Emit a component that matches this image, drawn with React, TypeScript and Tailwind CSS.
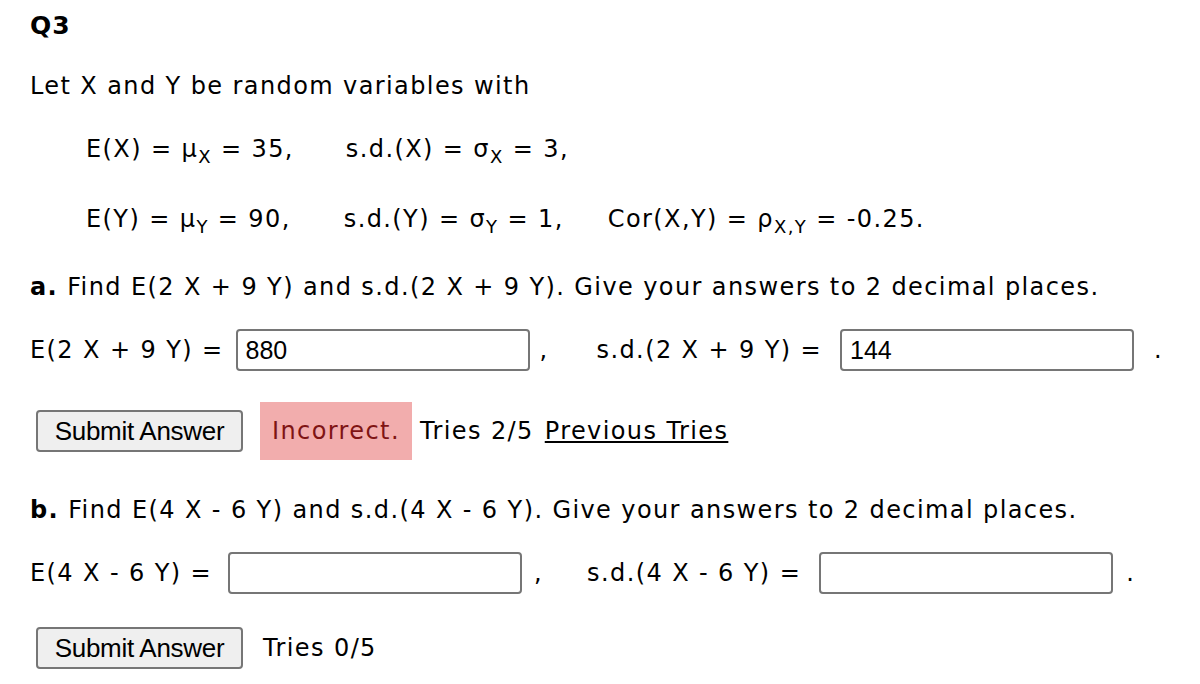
import React from "react";

const font = { fontFamily: 'Verdana, "DejaVu Sans", sans-serif' };

function Sub({ children }: { children: React.ReactNode }) {
  return <span className="relative top-[6px] text-[18px]">{children}</span>;
}

function AnswerBox({ value }: { value?: string }) {
  return (
    <input
      readOnly
      value={value ?? ""}
      className="w-[294px] h-[42px] border-2 border-[#767676] rounded-[4px] px-[8px] text-[25px] tracking-normal text-black bg-white outline-none font-['Liberation_Sans',Arial,sans-serif]"
    />
  );
}

function SubmitButton() {
  return (
    <button className="h-[42px] w-[207px] ml-[6px] border-2 border-[#767676] rounded-[4px] bg-[#efefef] text-[26px] tracking-[-0.3px] text-black font-['Liberation_Sans',Arial,sans-serif]">
      Submit Answer
    </button>
  );
}

export default function App() {
  return (
    <div className="w-[1200px] h-[684px] bg-white text-black text-[24px] leading-[28px] tracking-[1.4px] pl-[30px] overflow-hidden" style={font}>
      <div className="pt-[11px] text-[25px] font-bold leading-[30px] tracking-[1px]">Q3</div>

      <div className="mt-[31px]">Let X and Y be random variables with</div>

      <div className="mt-[35px] ml-[56px] flex">
        <span>
          E(X) = μ<Sub>X</Sub> = 35,
        </span>
        <span className="ml-[52px]">
          s.d.(X) = σ<Sub>X</Sub> = 3,
        </span>
      </div>

      <div className="mt-[40px] ml-[56px] flex">
        <span>
          E(Y) = μ<Sub>Y</Sub> = 90,
        </span>
        <span className="ml-[53px]">
          s.d.(Y) = σ<Sub>Y</Sub> = 1,
        </span>
        <span className="ml-[44px]">
          Cor(X,Y) = ρ<Sub>X,Y</Sub> = -0.25.
        </span>
      </div>

      <div className="mt-[38px]">
        <b>a.</b> Find E(2 X + 9 Y) and s.d.(2 X + 9 Y). Give your answers to 2 decimal places.
      </div>

      <div className="mt-[28px] flex items-center">
        <span>E(2 X + 9 Y) =</span>
        <span className="ml-[12px]">
          <AnswerBox value="880" />
        </span>
        <span className="ml-[10px]">,</span>
        <span className="ml-[48px]">s.d.(2 X + 9 Y) =</span>
        <span className="ml-[18px]">
          <AnswerBox value="144" />
        </span>
        <span className="ml-[20px]">.</span>
      </div>

      <div className="mt-[31px] flex items-center">
        <SubmitButton />
        <span className="ml-[17px] bg-[#f2adad] text-[#7f1414] px-[12px] py-[15px]">Incorrect.</span>
        <span className="ml-[8px]">Tries 2/5</span>
        <a className="ml-[11px] underline">Previous Tries</a>
      </div>

      <div className="mt-[36px]">
        <b>b.</b> Find E(4 X - 6 Y) and s.d.(4 X - 6 Y). Give your answers to 2 decimal places.
      </div>

      <div className="mt-[28px] flex items-center">
        <span>E(4 X - 6 Y) =</span>
        <span className="ml-[16px]">
          <AnswerBox />
        </span>
        <span className="ml-[12px]">,</span>
        <span className="ml-[44px]">s.d.(4 X - 6 Y) =</span>
        <span className="ml-[18px]">
          <AnswerBox />
        </span>
        <span className="ml-[13px]">.</span>
      </div>

      <div className="mt-[33px] flex items-center">
        <SubmitButton />
        <span className="ml-[20px]">Tries 0/5</span>
      </div>
    </div>
  );
}
